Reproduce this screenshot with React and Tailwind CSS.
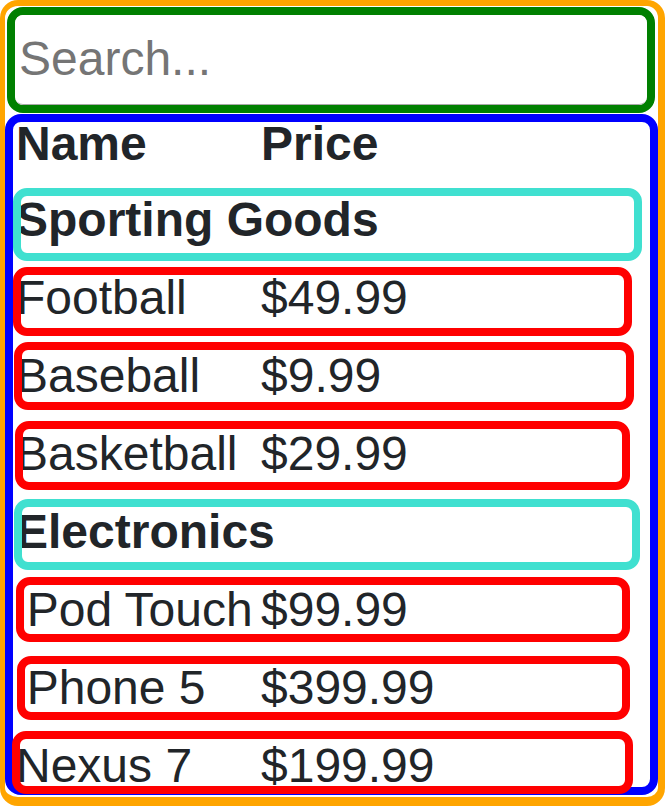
import React from "react";

const rows = [
  { type: "cat", name: "Sporting Goods", box: "top-[-10px] left-0 w-[629px] h-[73px]" },
  { type: "item", name: "Football", price: "$49.99", box: "top-[-9px] left-0 w-[619px] h-[69px]" },
  { type: "item", name: "Baseball", price: "$9.99", box: "top-[-12px] left-[1px] w-[620px] h-[68px]" },
  { type: "item", name: "Basketball", price: "$29.99", box: "top-[-11px] left-[2px] w-[615px] h-[69px]" },
  { type: "cat", name: "Electronics", box: "top-[-11px] left-[1px] w-[626px] h-[71px]" },
  { type: "item", name: "iPod Touch", price: "$99.99", box: "top-[-11px] left-[3px] w-[614px] h-[65px]" },
  { type: "item", name: "iPhone 5", price: "$399.99", box: "top-[-10px] left-[4px] w-[613px] h-[64px]" },
  { type: "item", name: "Nexus 7", price: "$199.99", box: "top-[-13px] left-[-1px] w-[621px] h-[63px]", last: true },
];

export default function App() {
  return (
    <div className="w-[665px] h-[806px] bg-white font-['Liberation_Sans',Arial,sans-serif] text-[#212529]">
      <div className="w-[665px] h-[806px] border-[#ffa500] border-l-[5px] border-t-[6px] border-r-[7px] border-b-[9px] rounded-[18px]">
        <div className="mt-[1px] ml-[2px] mr-[3px] h-[106px] border-[8px] border-[#008000] rounded-[16px] overflow-hidden bg-white">
          <input
            type="text"
            placeholder="Search..."
            className="block w-full h-[90px] pl-[4px] pb-[2px] text-[48px] leading-[54px] bg-white text-[#212529] placeholder:text-[#757575] border-0 border-b border-[#a8a8a8] rounded-[8px] outline-none font-['Liberation_Sans',Arial,sans-serif]"
          />
        </div>
        <div className="mt-[1px] h-[681px] border-[8px] border-[#0000ff] rounded-[16px] bg-white">
          <div className="flex h-[76px] text-[48px] leading-[44px] font-bold">
            <div className="w-[248px] pl-[3px]">Name</div>
            <div>Price</div>
          </div>
          {rows.map((r) => (
            <div
              key={r.name}
              className={`relative flex text-[48px] leading-[44px] ${r.last ? "h-[43px]" : "h-[78px]"}`}
            >
              {r.type === "cat" ? (
                <div className="pl-[3px] font-bold whitespace-nowrap">{r.name}</div>
              ) : (
                <>
                  <div className="w-[248px] pl-[3px] whitespace-nowrap">{r.name}</div>
                  <div className="whitespace-nowrap">{r.price}</div>
                </>
              )}
              <div
                className={`pointer-events-none absolute ${r.box} border-[8px] rounded-[14px] ${
                  r.type === "cat" ? "border-[#40e0d0]" : "border-[#ff0000]"
                }`}
              />
            </div>
          ))}
        </div>
      </div>
    </div>
  );
}
